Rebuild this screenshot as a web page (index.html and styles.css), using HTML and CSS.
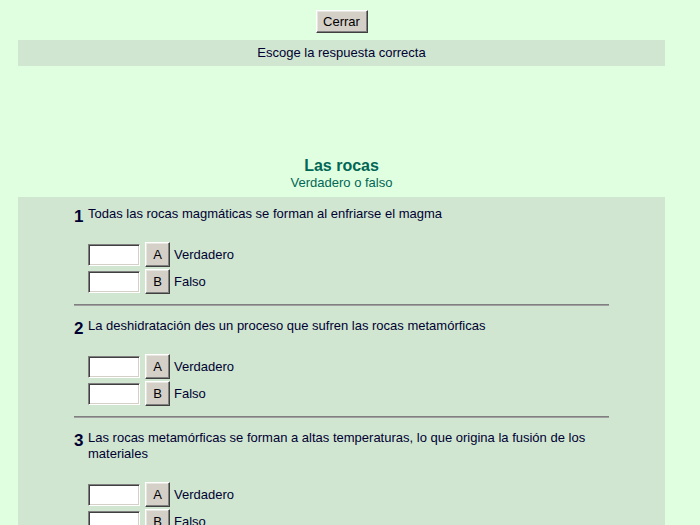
FILE: index.html
```html
<!DOCTYPE html>
<html lang="es">
<head>
<meta charset="utf-8">
<title>Las rocas</title>
<link rel="stylesheet" href="styles.css">
</head>
<body>
<div class="page">
  <div class="top">
    <button class="btn close">Cerrar</button>
  </div>
  <div class="bar">Escoge la respuesta correcta</div>
  <div class="head">
    <div class="title">Las rocas</div>
    <div class="subtitle">Verdadero o falso</div>
  </div>
  <div class="panel">
    <div class="quiz">
      <div class="q">
        <div class="qline"><span class="num">1</span><span class="text">Todas las rocas magmáticas se forman al enfriarse el magma</span></div>
        <div class="opts">
          <div class="opt"><input class="box" type="text"><button class="btn letter">A</button><span class="lab">Verdadero</span></div>
          <div class="opt"><input class="box" type="text"><button class="btn letter">B</button><span class="lab">Falso</span></div>
        </div>
      </div>
      <hr class="sep">
      <div class="q">
        <div class="qline"><span class="num">2</span><span class="text">La deshidratación des un proceso que sufren las rocas metamórficas</span></div>
        <div class="opts">
          <div class="opt"><input class="box" type="text"><button class="btn letter">A</button><span class="lab">Verdadero</span></div>
          <div class="opt"><input class="box" type="text"><button class="btn letter">B</button><span class="lab">Falso</span></div>
        </div>
      </div>
      <hr class="sep">
      <div class="q">
        <div class="qline"><span class="num">3</span><span class="text">Las rocas metamórficas se forman a altas temperaturas, lo que origina la fusión de los materiales</span></div>
        <div class="opts">
          <div class="opt"><input class="box" type="text"><button class="btn letter">A</button><span class="lab">Verdadero</span></div>
          <div class="opt"><input class="box" type="text"><button class="btn letter">B</button><span class="lab">Falso</span></div>
        </div>
      </div>
    </div>
  </div>
</div>
</body>
</html>
```
FILE: styles.css
```css
html, body {
  margin: 0;
  padding: 0;
  background: #E0FFE0;
  height: 100%;
  overflow: hidden;
}
body {
  font-family: "Liberation Sans", Arial, sans-serif;
  font-size: 13px;
  color: #000033;
}
.page {
  margin: 0 35px 0 18px;
}
.top {
  display: flex;
  justify-content: center;
  padding-top: 10px;
}
.btn {
  font-family: "Liberation Sans", Arial, sans-serif;
  font-size: 13px;
  color: #000;
  background: #D4D0C8;
  border: 1px solid;
  border-color: #FFFFFF #404040 #404040 #FFFFFF;
  box-shadow: inset -1px -1px 0 #808080, inset 1px 1px 0 #E8E6E0;
  padding: 0;
  margin: 0;
  border-radius: 0;
  cursor: default;
}
.close {
  width: 52px;
  height: 23px;
}
.bar {
  margin-top: 7px;
  height: 26px;
  line-height: 26px;
  background: #D0E6D0;
  text-align: center;
  color: #000033;
}
.head {
  text-align: center;
  color: #006655;
  padding-top: 90px;
}
.title {
  font-size: 16px;
  font-weight: bold;
  line-height: 19px;
}
.subtitle {
  font-size: 13px;
  line-height: 16px;
}
.panel {
  margin-top: 6px;
  background: #D0E6D0;
  padding-top: 9px;
  min-height: 400px;
}
.quiz {
  width: 535px;
  margin-left: 56px;
}
.qline {
  display: flex;
  align-items: flex-start;
}
.num {
  width: 14px;
  height: 16px;
  flex: none;
  font-size: 17px;
  font-weight: bold;
  line-height: 21px;
  color: #000033;
}
.text {
  line-height: 16px;
  padding-right: 14px;
}
.opts {
  display: flex;
  flex-direction: column;
  gap: 2px;
  padding-top: 20px;
  padding-left: 14px;
  padding-bottom: 10px;
}
.opt {
  display: flex;
  align-items: center;
  height: 25px;
}
.box {
  box-sizing: border-box;
  width: 52px;
  height: 22px;
  margin: 0;
  padding: 0;
  background: #FFFFFF;
  border: 1px solid;
  border-color: #808080 #FFFFFF #FFFFFF #808080;
  box-shadow: inset 1px 1px 0 #404040, inset -1px -1px 0 #D4D0C8;
}
.letter {
  box-sizing: border-box;
  width: 25px;
  height: 25px;
  margin-left: 5px;
}
.lab {
  margin-left: 4px;
  color: #000033;
}
.sep {
  margin: 0 0 12px 0;
  height: 0;
  border: 0;
  border-top: 1px solid #808080;
  border-bottom: 1px solid #A0A0A0;
}
```
